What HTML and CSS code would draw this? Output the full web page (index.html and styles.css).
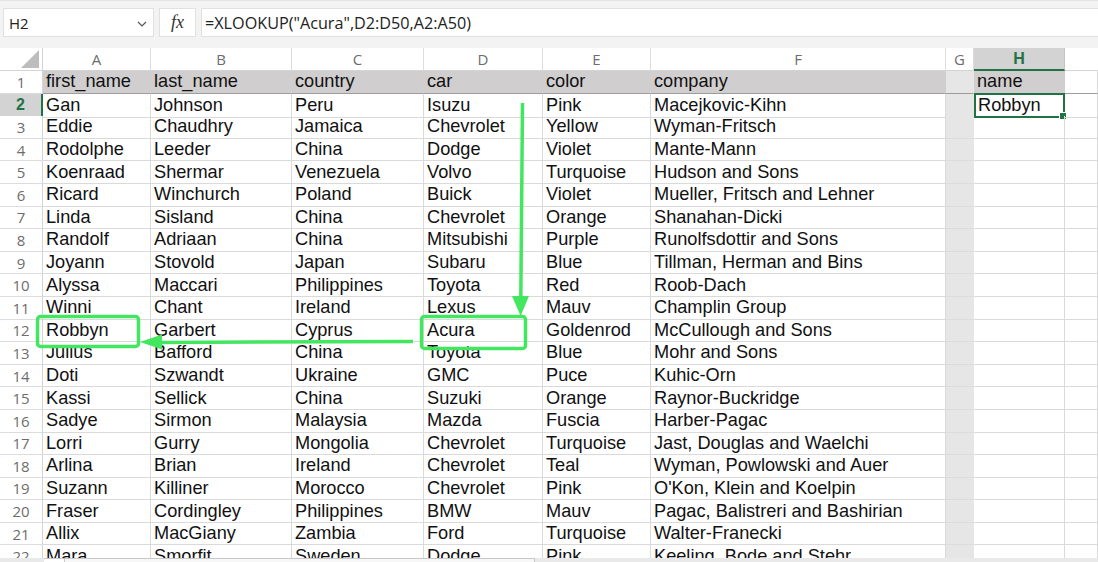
FILE: index.html
```html
<!DOCTYPE html>
<html>
<head>
<meta charset="utf-8">
<link rel="stylesheet" href="styles.css">
</head>
<body>
<div class="app">
  <div class="fbar">
    <div class="namebox"><span>H2</span>
      <svg class="chev" width="10" height="6" viewBox="0 0 10 6"><path d="M1 1 L5 5 L9 1" fill="none" stroke="#555" stroke-width="1.2"/></svg>
    </div>
    <div class="fxbox"><span class="fx">fx</span></div>
    <div class="formula">=XLOOKUP("Acura",D2:D50,A2:A50)</div>
  </div>
  <div class="sheet">
    <div class="row hdr">
      <div class="corner"><svg width="20" height="20" viewBox="0 0 20 20"><path d="M19 1 L19 19 L1 19 Z" fill="#bdbdbd"/></svg></div>
      <div class="ch">A</div><div class="ch">B</div><div class="ch">C</div><div class="ch">D</div><div class="ch">E</div><div class="ch">F</div><div class="ch">G</div><div class="ch sel">H</div><div class="ch last"></div>
    </div>
    <div class="row r1">
      <div class="rh">1</div>
      <div class="c f">first_name</div><div class="c f">last_name</div><div class="c f">country</div><div class="c f">car</div><div class="c f">color</div><div class="c f">company</div><div class="c g"></div><div class="c f hname">name</div><div class="c"></div>
    </div>
    <div class="row">
      <div class="rh selr">2</div>
      <div class="c">Gan</div><div class="c">Johnson</div><div class="c">Peru</div><div class="c">Isuzu</div><div class="c">Pink</div><div class="c">Macejkovic-Kihn</div><div class="c g"></div><div class="c active">Robbyn<span class="handle"></span></div><div class="c"></div>
    </div>
    <div class="row">
      <div class="rh">3</div>
      <div class="c">Eddie</div><div class="c">Chaudhry</div><div class="c">Jamaica</div><div class="c">Chevrolet</div><div class="c">Yellow</div><div class="c">Wyman-Fritsch</div><div class="c g"></div><div class="c"></div><div class="c"></div>
    </div>
    <div class="row">
      <div class="rh">4</div>
      <div class="c">Rodolphe</div><div class="c">Leeder</div><div class="c">China</div><div class="c">Dodge</div><div class="c">Violet</div><div class="c">Mante-Mann</div><div class="c g"></div><div class="c"></div><div class="c"></div>
    </div>
    <div class="row">
      <div class="rh">5</div>
      <div class="c">Koenraad</div><div class="c">Shermar</div><div class="c">Venezuela</div><div class="c">Volvo</div><div class="c">Turquoise</div><div class="c">Hudson and Sons</div><div class="c g"></div><div class="c"></div><div class="c"></div>
    </div>
    <div class="row">
      <div class="rh">6</div>
      <div class="c">Ricard</div><div class="c">Winchurch</div><div class="c">Poland</div><div class="c">Buick</div><div class="c">Violet</div><div class="c">Mueller, Fritsch and Lehner</div><div class="c g"></div><div class="c"></div><div class="c"></div>
    </div>
    <div class="row">
      <div class="rh">7</div>
      <div class="c">Linda</div><div class="c">Sisland</div><div class="c">China</div><div class="c">Chevrolet</div><div class="c">Orange</div><div class="c">Shanahan-Dicki</div><div class="c g"></div><div class="c"></div><div class="c"></div>
    </div>
    <div class="row">
      <div class="rh">8</div>
      <div class="c">Randolf</div><div class="c">Adriaan</div><div class="c">China</div><div class="c">Mitsubishi</div><div class="c">Purple</div><div class="c">Runolfsdottir and Sons</div><div class="c g"></div><div class="c"></div><div class="c"></div>
    </div>
    <div class="row">
      <div class="rh">9</div>
      <div class="c">Joyann</div><div class="c">Stovold</div><div class="c">Japan</div><div class="c">Subaru</div><div class="c">Blue</div><div class="c">Tillman, Herman and Bins</div><div class="c g"></div><div class="c"></div><div class="c"></div>
    </div>
    <div class="row">
      <div class="rh">10</div>
      <div class="c">Alyssa</div><div class="c">Maccari</div><div class="c">Philippines</div><div class="c">Toyota</div><div class="c">Red</div><div class="c">Roob-Dach</div><div class="c g"></div><div class="c"></div><div class="c"></div>
    </div>
    <div class="row">
      <div class="rh">11</div>
      <div class="c">Winni</div><div class="c">Chant</div><div class="c">Ireland</div><div class="c">Lexus</div><div class="c">Mauv</div><div class="c">Champlin Group</div><div class="c g"></div><div class="c"></div><div class="c"></div>
    </div>
    <div class="row">
      <div class="rh">12</div>
      <div class="c">Robbyn</div><div class="c">Garbert</div><div class="c">Cyprus</div><div class="c">Acura</div><div class="c">Goldenrod</div><div class="c">McCullough and Sons</div><div class="c g"></div><div class="c"></div><div class="c"></div>
    </div>
    <div class="row">
      <div class="rh">13</div>
      <div class="c">Julius</div><div class="c">Bafford</div><div class="c">China</div><div class="c">Toyota</div><div class="c">Blue</div><div class="c">Mohr and Sons</div><div class="c g"></div><div class="c"></div><div class="c"></div>
    </div>
    <div class="row">
      <div class="rh">14</div>
      <div class="c">Doti</div><div class="c">Szwandt</div><div class="c">Ukraine</div><div class="c">GMC</div><div class="c">Puce</div><div class="c">Kuhic-Orn</div><div class="c g"></div><div class="c"></div><div class="c"></div>
    </div>
    <div class="row">
      <div class="rh">15</div>
      <div class="c">Kassi</div><div class="c">Sellick</div><div class="c">China</div><div class="c">Suzuki</div><div class="c">Orange</div><div class="c">Raynor-Buckridge</div><div class="c g"></div><div class="c"></div><div class="c"></div>
    </div>
    <div class="row">
      <div class="rh">16</div>
      <div class="c">Sadye</div><div class="c">Sirmon</div><div class="c">Malaysia</div><div class="c">Mazda</div><div class="c">Fuscia</div><div class="c">Harber-Pagac</div><div class="c g"></div><div class="c"></div><div class="c"></div>
    </div>
    <div class="row">
      <div class="rh">17</div>
      <div class="c">Lorri</div><div class="c">Gurry</div><div class="c">Mongolia</div><div class="c">Chevrolet</div><div class="c">Turquoise</div><div class="c">Jast, Douglas and Waelchi</div><div class="c g"></div><div class="c"></div><div class="c"></div>
    </div>
    <div class="row">
      <div class="rh">18</div>
      <div class="c">Arlina</div><div class="c">Brian</div><div class="c">Ireland</div><div class="c">Chevrolet</div><div class="c">Teal</div><div class="c">Wyman, Powlowski and Auer</div><div class="c g"></div><div class="c"></div><div class="c"></div>
    </div>
    <div class="row">
      <div class="rh">19</div>
      <div class="c">Suzann</div><div class="c">Killiner</div><div class="c">Morocco</div><div class="c">Chevrolet</div><div class="c">Pink</div><div class="c">O'Kon, Klein and Koelpin</div><div class="c g"></div><div class="c"></div><div class="c"></div>
    </div>
    <div class="row">
      <div class="rh">20</div>
      <div class="c">Fraser</div><div class="c">Cordingley</div><div class="c">Philippines</div><div class="c">BMW</div><div class="c">Mauv</div><div class="c">Pagac, Balistreri and Bashirian</div><div class="c g"></div><div class="c"></div><div class="c"></div>
    </div>
    <div class="row">
      <div class="rh">21</div>
      <div class="c">Allix</div><div class="c">MacGiany</div><div class="c">Zambia</div><div class="c">Ford</div><div class="c">Turquoise</div><div class="c">Walter-Franecki</div><div class="c g"></div><div class="c"></div><div class="c"></div>
    </div>
    <div class="row">
      <div class="rh">22</div>
      <div class="c">Mara</div><div class="c">Smorfit</div><div class="c">Sweden</div><div class="c">Dodge</div><div class="c">Pink</div><div class="c">Keeling, Bode and Stehr</div><div class="c g"></div><div class="c"></div><div class="c"></div>
    </div>
  </div>
  <div class="hscroll">
    <div class="hs-btn"></div>
    <div class="hs-thumb"></div>
  </div>
  <svg class="overlay" width="1098" height="562" viewBox="0 0 1098 562">
    <g fill="none" stroke="#43e65f" stroke-width="3.5" stroke-linejoin="round">
      <rect x="37.5" y="316.5" width="101" height="30" rx="3"/>
      <rect x="421.5" y="316.5" width="104" height="32" rx="3"/>
      <path d="M522.5 103 L520.8 300"/>
      <path d="M413 341.5 L158 342.5"/>
    </g>
    <g fill="#43e65f">
      <path d="M512 296 L529 296 L520.6 316 Z"/>
      <path d="M140 342 L162 334.5 L162 349.5 Z"/>
    </g>
  </svg>
</div>
</body>
</html>
```

FILE: styles.css
```css
html, body {
  margin: 0;
  padding: 0;
  background: #ffffff;
}

.app {
  position: relative;
  width: 1098px;
  height: 562px;
  overflow: hidden;
  background: #f3f3f3;
  font-family: "Liberation Sans", Arial, sans-serif;
}

.fbar {
  display: flex;
  align-items: stretch;
  height: 29px;
  padding: 7px 0 11px 3px;
  gap: 5px;
  border-top: 1px solid #e4e4e4;
  box-sizing: content-box;
}

.namebox {
  width: 151px;
  box-sizing: border-box;
  background: #ffffff;
  border: 1px solid #e1e1e1;
  display: flex;
  align-items: center;
  justify-content: space-between;
  padding: 0 6px 0 5px;
  font-family: "Open Sans", sans-serif;
  font-size: 15px;
  color: #222;
}

.chev {
  margin-top: 2px;
}

.fxbox {
  width: 37px;
  box-sizing: border-box;
  background: #ffffff;
  border: 1px solid #e1e1e1;
  display: flex;
  align-items: center;
  justify-content: center;
}

.fx {
  font-family: "Liberation Serif", serif;
  font-style: italic;
  font-size: 18px;
  color: #333;
}

.formula {
  flex: 1;
  background: #ffffff;
  border: 1px solid #e1e1e1;
  border-right: none;
  display: flex;
  align-items: center;
  padding-left: 3px;
  font-family: "Open Sans", sans-serif;
  font-size: 16.2px;
  color: #222;
  white-space: nowrap;
}

.sheet {
  height: 510px;
  overflow: hidden;
  background: #ffffff;
}

.row {
  display: grid;
  grid-template-columns: 43px 108px 141px 132px 119px 108px 295px 28px 91px 1fr;
  height: 22.6px;
}

.row.hdr {
  height: 23px;
  background: #ffffff;
}

.corner {
  display: flex;
  align-items: flex-end;
  justify-content: flex-end;
  padding: 0 2px 1px 0;
  border-right: 1px solid #d4d4d4;
  border-bottom: 1px solid #d4d4d4;
}

.ch {
  display: flex;
  align-items: center;
  justify-content: center;
  font-family: "Open Sans", sans-serif;
  font-size: 15px;
  color: #6d6d6d;
  border-right: 1px solid #dcdcdc;
  border-bottom: 1px solid #d4d4d4;
  box-sizing: border-box;
}

.ch.sel {
  background: #d3d3d3;
  color: #217346;
  font-weight: 700;
  font-family: "Liberation Sans", sans-serif;
  font-size: 16px;
  border-bottom: 2px solid #217346;
  border-right: 1px solid #c4c4c4;
}

.ch.last {
  border-right: none;
}

.rh {
  display: flex;
  align-items: center;
  justify-content: center;
  font-family: "Open Sans", sans-serif;
  font-size: 15px;
  color: #6d6d6d;
  background: #ffffff;
  border-right: 1px solid #d4d4d4;
  border-bottom: 1px solid #dcdcdc;
  box-sizing: border-box;
}

.rh.selr {
  background: #d3d3d3;
  color: #217346;
  font-weight: 700;
  font-family: "Liberation Sans", sans-serif;
  font-size: 16px;
  border-right: 2px solid #217346;
}

.c {
  position: relative;
  display: flex;
  align-items: center;
  padding-left: 3px;
  font-size: 18.2px;
  color: #111;
  white-space: nowrap;
  overflow: hidden;
  border-right: 1px solid #dadada;
  border-bottom: 1px solid #dadada;
  box-sizing: border-box;
}

.c.f {
  background: #d0cece;
  border-right-color: #d0cece;
}

.c.g {
  background: #e6e6e6;
  border-right-color: #e6e6e6;
  border-bottom-color: #dcdcdc;
}

.r1 .c {
  border-bottom: 1px solid #9c9c9c;
}

.c.hname {
  border-right: 1px solid #d0cece;
}

.c.active {
  overflow: visible;
  border: 2px solid #217346;
  padding-left: 2px;
  margin-top: -1px;
}

.handle {
  position: absolute;
  right: -4px;
  bottom: -4px;
  width: 6px;
  height: 6px;
  background: #217346;
  border: 1px solid #ffffff;
}

.hscroll {
  display: flex;
  height: 5px;
  background: #e9e9e9;
  padding-left: 44px;
}

.hs-btn {
  width: 20px;
  background: #ffffff;
  border-top: 1px solid #c8c8c8;
  border-right: 1px solid #c8c8c8;
}

.hs-thumb {
  width: 469px;
  background: #f7f7f7;
  border-top: 1px solid #c8c8c8;
  border-right: 1px solid #c8c8c8;
}

.overlay {
  position: absolute;
  left: 0;
  top: 0;
  pointer-events: none;
}
```
